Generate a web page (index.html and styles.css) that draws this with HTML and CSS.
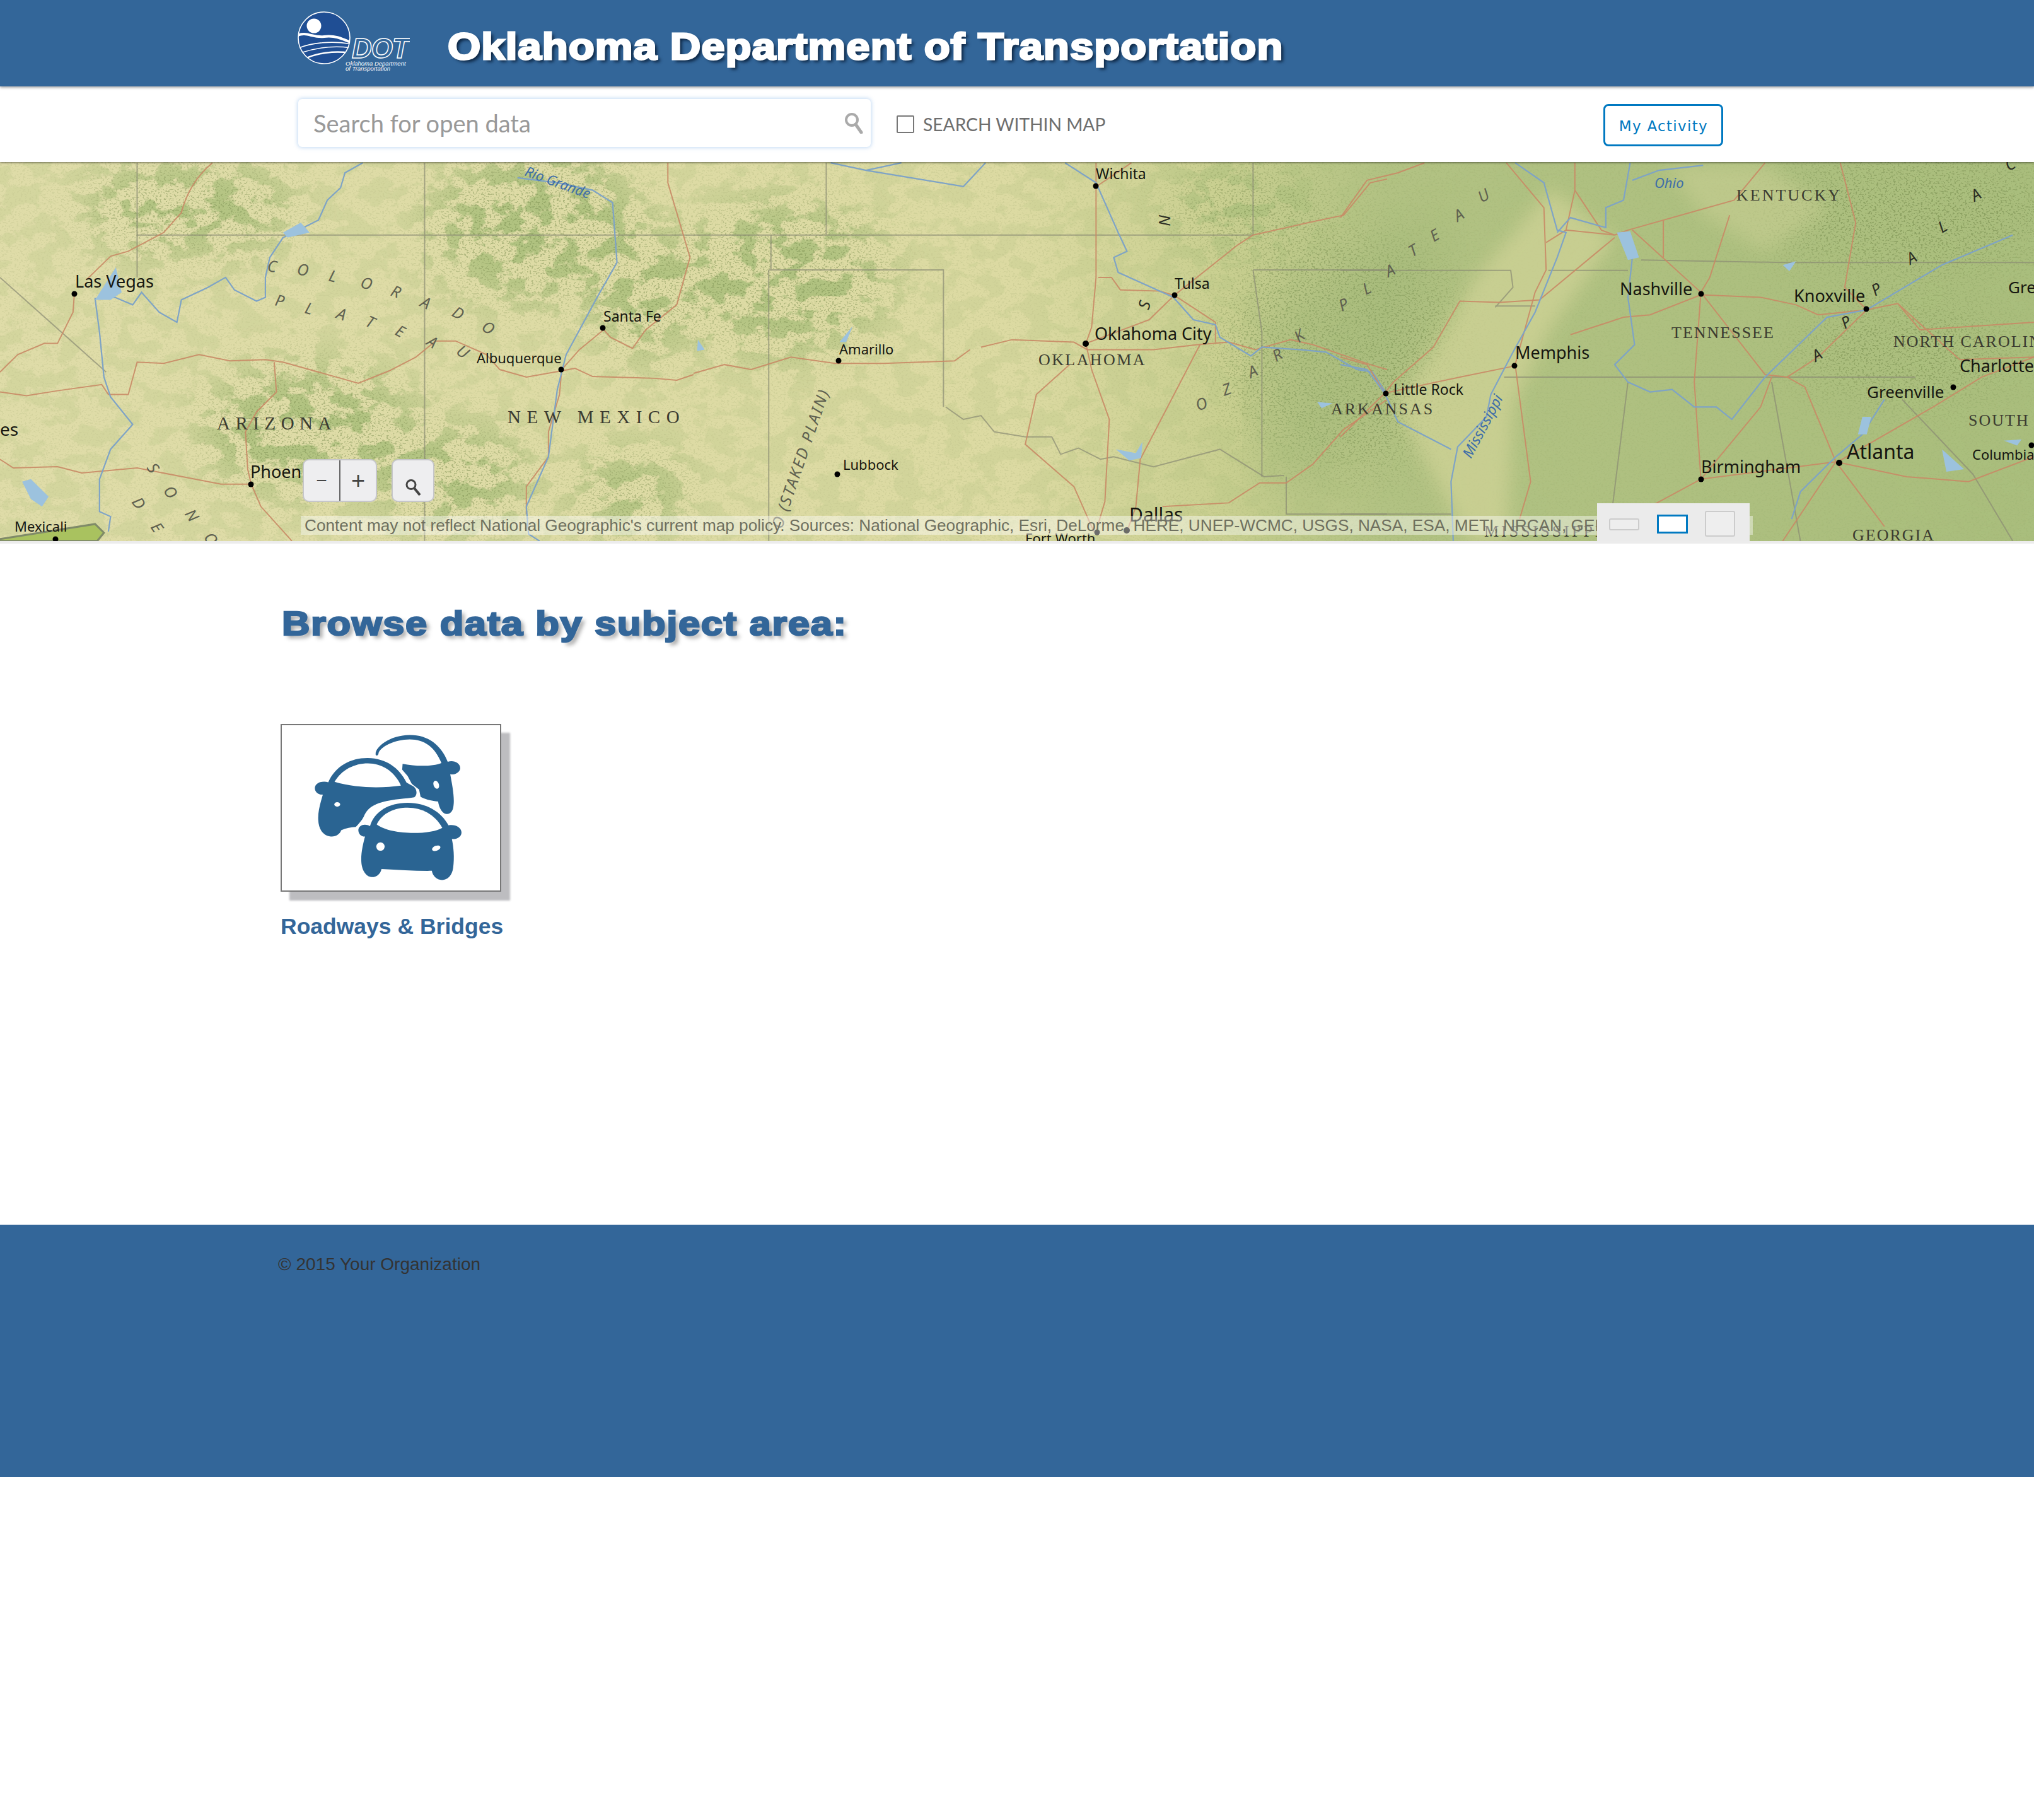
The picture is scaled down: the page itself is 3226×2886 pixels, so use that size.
FILE: index.html
```html
<!DOCTYPE html>
<html lang="en">
<head>
  <meta charset="UTF-8" />
  <title>Oklahoma Department of Transportation</title>
  <link rel="stylesheet" href="styles.css">
</head>
<body>
  <header class="site-header">
    <svg class="logo" viewBox="0 0 180 100" aria-hidden="true">
      <defs><clipPath id="logoClip"><circle cx="44" cy="42" r="41"/></clipPath></defs>
      <circle cx="44" cy="42" r="41" fill="#1f4e94" stroke="#fff" stroke-width="1.6"/>
      <circle cx="28" cy="23" r="11.5" fill="#fff"/>
      <g clip-path="url(#logoClip)" fill="none" stroke="#fff">
        <path d="M2 38 C16 32 26 42 44 40 C60 38 70 42 88 50" stroke-width="4"/>
        <path d="M4 58 C24 50 56 46 88 52" stroke-width="1.6"/>
        <path d="M6 66 C30 58 60 54 88 58" stroke-width="1.6"/>
        <path d="M12 76 C32 66 60 62 86 66" stroke-width="2.4"/>
      </g>
      <text class="logo-dot" x="88" y="74">DOT</text>
      <text class="logo-small" x="78" y="86">Oklahoma Department</text>
      <text class="logo-small" x="78" y="94">of Transportation</text>
    </svg>
    <h1 class="site-title">Oklahoma Department of Transportation</h1>
  </header>

  <div class="search-bar">
    <div class="search-box">
      <span class="search-placeholder">Search for open data</span>
      <svg class="search-icon" viewBox="0 0 30 34" aria-hidden="true">
        <circle cx="12" cy="12" r="9" fill="none" stroke="#aaa" stroke-width="4"/>
        <path d="M18 19 L27 32" stroke="#aaa" stroke-width="5" stroke-linecap="round"/>
      </svg>
    </div>
    <label class="within-map"><span class="checkbox"></span>SEARCH WITHIN MAP</label>
    <a class="activity-btn">My Activity</a>
  </div>

  <section class="map">
    <svg class="map-art" viewBox="0 257 3226 601" preserveAspectRatio="none" aria-hidden="true">
      <defs>
        <linearGradient id="land" x1="0" x2="1" y1="0" y2="0">
          <stop offset="0" stop-color="#dfdca8"/>
          <stop offset=".5" stop-color="#dcdaa2"/>
          <stop offset=".6" stop-color="#c9cf90"/>
          <stop offset=".68" stop-color="#b2c283"/>
          <stop offset="1" stop-color="#a9bd7c"/>
        </linearGradient>
        <filter id="patches" x="0" y="0" width="100%" height="100%" color-interpolation-filters="sRGB">
          <feTurbulence type="fractalNoise" baseFrequency=".024 .034" numOctaves="6" seed="7"/>
          <feColorMatrix values="0 0 0 0 .69  0 0 0 0 .76  0 0 0 0 .50  0 0 0 12 -5.9"/>
        </filter>
        <filter id="speckle" x="0" y="0" width="100%" height="100%" color-interpolation-filters="sRGB">
          <feTurbulence type="fractalNoise" baseFrequency=".3 .4" numOctaves="2" seed="3"/>
          <feColorMatrix values="0 0 0 0 .46  0 0 0 0 .54  0 0 0 0 .30  0 0 0 10 -5.6"/>
        </filter>
        <filter id="soft"><feGaussianBlur stdDeviation="14"/></filter>
        <filter id="softer"><feGaussianBlur stdDeviation="38"/></filter>
        <!-- where the vegetation texture shows through -->
        <mask id="veg" maskUnits="userSpaceOnUse" x="0" y="257" width="3226" height="601">
          <rect y="257" width="3226" height="601" fill="#3a3a3a"/>
          <g filter="url(#softer)">
            <g fill="#fff">
              <ellipse cx="300" cy="330" rx="170" ry="70"/>
              <ellipse cx="850" cy="360" rx="170" ry="120"/>
              <ellipse cx="1020" cy="470" rx="70" ry="100"/>
              <ellipse cx="490" cy="680" rx="170" ry="100"/>
              <ellipse cx="720" cy="760" rx="120" ry="80"/>
              <ellipse cx="1240" cy="440" rx="170" ry="120"/>
              <ellipse cx="1000" cy="780" rx="90" ry="60"/>
              <ellipse cx="1980" cy="330" rx="130" ry="60"/>
            </g>
            <rect x="2300" y="200" width="1000" height="720" fill="#000" opacity=".4"/>
          </g>
        </mask>
        <mask id="vegEast" maskUnits="userSpaceOnUse" x="0" y="257" width="3226" height="601">
          <g filter="url(#softer)" fill="#fff">
            <ellipse cx="2130" cy="560" rx="190" ry="180"/>
            <ellipse cx="3030" cy="340" rx="230" ry="90"/>
            <ellipse cx="3020" cy="560" rx="170" ry="70"/>
          </g>
        </mask>
      </defs>

      <rect y="257" width="3226" height="601" fill="url(#land)"/>
      <g mask="url(#veg)">
        <rect y="257" width="3226" height="601" filter="url(#patches)"/>
        <rect y="257" width="3226" height="601" filter="url(#speckle)" opacity=".45"/>
      </g>
      <g mask="url(#vegEast)">
        <rect y="257" width="3226" height="601" filter="url(#speckle)" opacity=".5"/>
      </g>
      <!-- pale Mississippi valley and darker Ozark green -->
      <path d="M2460 300 L2340 440 L2270 560 L2210 640 L2330 858 L2390 858 L2400 640 L2460 520 L2560 380 Z" fill="#d2d498" opacity=".7" filter="url(#soft)"/>
      <path d="M2640 260 L2800 260 L2900 330 L2800 400 L2700 340 Z" fill="#cdd196" opacity=".5" filter="url(#soft)"/>
      <path d="M2000 480 L2140 420 L2300 330 L2250 500 L2170 640 L2090 800 L2000 760 Z" fill="#9ab272" opacity=".4" filter="url(#softer)"/>

      <!-- west -->
      <g transform="translate(0 250.3) scale(.7015 .395)" fill="none">
        <path class="border" d="M310 20 V480 M310 310 H1568 M960 20 V1538 M0 480 L240 860"/>
        <path class="road" d="M480 20 C440 80 420 150 410 220 L370 300 L290 375 L250 395 L195 490 M168 550 L165 620 L130 745 L100 745 L40 790 L0 860"/>
        <path class="road" d="M0 940 L60 955 L130 935 L230 910 L245 950 L290 950 L310 820 L370 825 L450 790 L520 815 L600 810 L640 820 L760 880 L810 905 L880 855 L940 800 L985 735 L1030 735 L1100 790 L1130 850 L1190 880 L1270 855 L1300 845 L1340 878 L1480 885 L1530 893 L1568 870"/>
        <path class="road" d="M620 820 L625 940 L580 1020 L555 1100 L560 1250 L568 1310 L500 1310 L310 1245 L185 1265 L130 1240 L30 1245 L0 1210 M568 1310 L590 1400 L660 1538"/>
        <path class="road" d="M1270 850 L1310 770 L1365 690 L1380 720 L1430 765 L1460 690 L1530 590 L1560 400 L1510 100 L1510 20 M1270 850 L1265 950 L1240 1100 L1240 1200 L1190 1320 L1190 1430"/>
        <path class="river" d="M820 20 L780 60 L770 120 L740 170 L720 250 L675 290 L640 320 L610 400 L600 480 L600 560 L580 575 L530 530 L510 480 L470 520 L410 570 L400 660 L360 620 L320 540 L300 590 L260 560 L215 565 L225 700 L235 880 L250 960 L300 1070 L250 1170 L225 1290 L225 1420 L250 1440 L245 1500"/>
        <path class="river" d="M1170 80 L1260 100 L1340 130 L1385 180 L1395 420 L1350 560 L1280 790 L1260 930 L1240 1200 L1190 1400 L1195 1510 L1220 1538"/>
        <path class="lake" d="M640 300 L680 260 L700 300 L650 320 Z M50 1300 L70 1290 L110 1360 L95 1400 L70 1370 Z M262 440 L275 540 L250 570 L215 570 Z"/>
        <path d="M0 1530 L215 1470 L235 1505 L220 1538 L0 1538 Z" fill="#a9c25f" stroke="#7f8a68" stroke-width="3" vector-effect="non-scaling-stroke"/>
      </g>

      <!-- central -->
      <g transform="translate(1100 250.3) scale(.7015 .395)" fill="none">
        <path class="border" d="M300 20 V310 M0 310 H1265 M175 310 V450 M170 450 H565 V1000 M170 450 V1538 M1265 20 V310 M1265 450 H1568 M1265 450 L1285 700 V1280 M1340 1280 V1430 H1568"/>
        <path class="border" d="M570 1000 L610 1050 L650 1035 L680 1100 L750 1120 L810 1120 L830 1190 L870 1165 L920 1210 L950 1200 L1040 1240 L1190 1170 L1290 1280 L1335 1275"/>
        <path class="road" d="M0 865 L70 830 L130 850 L220 800 L320 825 L430 825 L590 815 L625 770 M650 760 L720 730 L860 740 L890 770 L1040 770 L1140 750 L1210 740 L1270 770 L1350 730 L1400 750 L1530 830 L1568 850"/>
        <path class="road" d="M910 20 V480 L900 680 L887 745 L900 850 L940 1050 L930 1380 L910 1500 M915 110 L990 20"/>
        <path class="road" d="M915 480 H945 L965 530 L1055 535 L1087 552 L1230 350 L1265 310 L1390 260 L1470 230 L1530 100 L1568 85 M887 745 L1030 650 L1087 552 L1180 660 L1180 740"/>
        <path class="road" d="M850 830 L775 950 L750 1150 L860 1320 L905 1500 M1145 750 L1010 1210 L1000 1400 L980 1500 M1568 970 L1470 1090 L1400 1230 L1340 1305 L1280 1305 L1210 1385 L1060 1400"/>
        <path class="river" d="M310 20 L390 50 L470 20 M390 50 L610 115 L660 20 M840 20 L910 100 L960 300 L980 375 L950 400 L960 460 L1085 560 L1130 650 L1180 670 L1190 720 L1260 795 L1285 760 L1370 770 L1430 780 L1500 850 L1535 860 L1568 950"/>
        <path class="lake" d="M330 740 L360 675 L345 740 Z M955 1170 L1000 1185 L1015 1140 L1012 1205 L985 1215 Z M10 730 L25 770 L8 775 Z M1410 980 L1445 985 L1420 1005 Z"/>
      </g>

      <!-- east -->
      <g transform="translate(2126 250.3) scale(.7015 .395)" fill="none">
        <path class="border" d="M0 452 H385 L390 520 L350 600 M350 595 H440 M470 452 H650 M680 410 L1000 420 H1568 M370 880 H1300 M650 900 L615 1400 M975 900 L1040 1538 M0 1430 H250 M1270 970 L1430 1270 L1520 1538"/>
        <path class="road" d="M0 240 L60 90 L130 60 L190 20 M375 20 L460 200 L465 450 L440 540 L395 830 L430 1300 L405 1450 M530 20 V130 L510 290 L465 340 M530 130 L590 290 L620 310 L510 290"/>
        <path class="road" d="M620 310 L650 290 L810 210 L890 170 L960 20 M660 290 L815 540 L960 870 L1010 880 L1050 920 L1120 1220 L1230 1480 M880 230 L835 480 L815 540 L800 900 L815 1290 M730 250 V400"/>
        <path class="road" d="M620 320 L450 570 L360 580 L270 575 L210 760 L120 900 L100 945 M100 945 L270 880 L395 835 M0 1120 L100 945 M0 800 L60 830 L100 945"/>
        <path class="road" d="M520 710 L640 640 L700 630 L815 550 L950 560 L1030 590 L1080 630 L1190 610 L1260 585 L1400 810 L1568 800 M1260 585 L1310 690 L1568 660 M1190 610 L1080 800 L1010 880"/>
        <path class="road" d="M975 880 L950 1000 L815 1290 L700 1400 M815 1290 L1120 1220 L1280 1280 L1420 1300 L1568 1200 M1120 1220 L1000 1538 M1120 1225 L1340 1000 L1450 880 L1568 800 M1130 20 L1165 260 L1140 520 L1190 610"/>
        <path class="river" d="M395 20 L460 100 L490 290 L510 300 L490 400 L440 620 L390 780 L340 950 L330 1040 L265 1160 L250 1300 L255 1538 M655 20 L640 170 L600 200 L600 280 L520 240 L490 300"/>
        <path class="river" d="M630 300 L660 400 L650 560 L665 750 L620 830 L650 900 L700 940 L750 930 L800 1000 L850 1000 L885 1050 L960 880 L1100 640 L1190 610 L1360 430 L1520 310 M0 830 L60 850 L100 945 L130 1060 L250 1170 M660 90 L720 50 L820 30 M1230 970 L1180 1110 L1120 1200 L1040 1340 L1020 1450"/>
        <path class="lake" d="M625 300 L655 295 L675 400 L650 410 Z M1000 430 L1030 415 L1015 455 Z M1180 1040 L1200 1040 L1190 1110 L1170 1110 Z M1360 1170 L1410 1250 L1370 1260 Z M1500 1135 L1540 1130 L1530 1155 Z"/>
      </g>

      <!-- city dots -->
      <g fill="#000">
        <circle cx="118" cy="466" r="4.5"/><circle cx="398" cy="768" r="4.5"/><circle cx="890" cy="586" r="4.5"/>
        <circle cx="956" cy="520" r="4.5"/><circle cx="88" cy="855" r="4.5"/><circle cx="1738" cy="295" r="4.5"/>
        <circle cx="1863" cy="468" r="4.5"/><circle cx="1722" cy="545" r="5"/><circle cx="1330" cy="572" r="4.5"/>
        <circle cx="1328" cy="752" r="4.5"/><circle cx="1787" cy="841" r="5"/><circle cx="1740" cy="844" r="4.5"/>
        <circle cx="2198" cy="624" r="4.5"/><circle cx="2402" cy="580" r="4.5"/><circle cx="2698" cy="466" r="4.5"/>
        <circle cx="2960" cy="490" r="4.5"/><circle cx="3098" cy="614" r="4.5"/><circle cx="2698" cy="760" r="4.5"/>
        <circle cx="2917" cy="734" r="5"/><circle cx="3222" cy="706" r="4.5"/>
      </g>

      <!-- cities -->
      <g class="city">
        <text x="119" y="456" font-size="27">Las Vegas</text>
        <text x="756" y="576" font-size="22">Albuquerque</text>
        <text x="957" y="510" font-size="23">Santa Fe</text>
        <text x="397" y="758" font-size="27">Phoenix</text>
        <text x="23" y="843" font-size="22">Mexicali</text>
        <text x="0" y="691" font-size="28">es</text>
        <text x="1738" y="284" font-size="23">Wichita</text>
        <text x="1863" y="458" font-size="23">Tulsa</text>
        <text x="1736" y="539" font-size="27">Oklahoma City</text>
        <text x="1331" y="562" font-size="22">Amarillo</text>
        <text x="1337" y="745" font-size="22">Lubbock</text>
        <text x="1791" y="827" font-size="30">Dallas</text>
        <text x="1626" y="862" font-size="22">Fort Worth</text>
        <text x="2210" y="626" font-size="23">Little Rock</text>
        <text x="2403" y="569" font-size="27">Memphis</text>
        <text x="2569" y="468" font-size="27">Nashville</text>
        <text x="2845" y="479" font-size="27">Knoxville</text>
        <text x="3108" y="590" font-size="27">Charlotte</text>
        <text x="2961" y="631" font-size="26">Greenville</text>
        <text x="3185" y="465" font-size="26">Gre</text>
        <text x="2698" y="750" font-size="27">Birmingham</text>
        <text x="2929" y="728" font-size="32">Atlanta</text>
        <text x="3128" y="729" font-size="22">Columbia</text>
      </g>

      <!-- states -->
      <g class="state">
        <text x="344" y="681" font-size="29" letter-spacing="8.5">ARIZONA</text>
        <text x="805" y="671" font-size="29" letter-spacing="9.5">NEW MEXICO</text>
        <text x="1647" y="579" font-size="26" letter-spacing="2.4">OKLAHOMA</text>
        <text x="2111" y="657" font-size="26" letter-spacing="3">ARKANSAS</text>
        <text x="2754" y="318" font-size="26" letter-spacing="3">KENTUCKY</text>
        <text x="2651" y="536" font-size="26" letter-spacing="2">TENNESSEE</text>
        <text x="3003" y="550" font-size="26" letter-spacing="2">NORTH CAROLINA</text>
        <text x="3122" y="675" font-size="26" letter-spacing="2">SOUTH</text>
        <text x="2938" y="857" font-size="26" letter-spacing="2">GEORGIA</text>
        <text x="2354" y="851" font-size="26" letter-spacing="4">MISSISSIPPI</text>
      </g>

      <!-- physical regions, spaced along their arcs -->
      <g class="region">
        <text x="423" y="430" transform="rotate(8 423 430)">C</text>
        <text x="470" y="435" transform="rotate(10 470 435)">O</text>
        <text x="520" y="445" transform="rotate(14 520 445)">L</text>
        <text x="570" y="455" transform="rotate(18 570 455)">O</text>
        <text x="618" y="468" transform="rotate(22 618 468)">R</text>
        <text x="665" y="485" transform="rotate(26 665 485)">A</text>
        <text x="715" y="500" transform="rotate(30 715 500)">D</text>
        <text x="762" y="522" transform="rotate(34 762 522)">O</text>
        <text x="435" y="484" transform="rotate(12 435 484)">P</text>
        <text x="482" y="496" transform="rotate(16 482 496)">L</text>
        <text x="532" y="504" transform="rotate(20 532 504)">A</text>
        <text x="578" y="516" transform="rotate(24 578 516)">T</text>
        <text x="625" y="530" transform="rotate(28 625 530)">E</text>
        <text x="675" y="546" transform="rotate(32 675 546)">A</text>
        <text x="722" y="560" transform="rotate(36 722 560)">U</text>
        <text x="232" y="742" transform="rotate(55 232 742)">S</text>
        <text x="258" y="778" transform="rotate(55 258 778)">O</text>
        <text x="292" y="815" transform="rotate(55 292 815)">N</text>
        <text x="322" y="852" transform="rotate(55 322 852)">O</text>
        <text x="208" y="796" transform="rotate(55 208 796)">D</text>
        <text x="238" y="836" transform="rotate(55 238 836)">E</text>
        <text x="1838" y="340" transform="rotate(90 1838 340)" class="dark">N</text>
        <text x="1822" y="492" transform="rotate(-75 1822 492)" class="dark">S</text>
        <text x="1900" y="652" transform="rotate(-20 1900 652)">O</text>
        <text x="1942" y="628" transform="rotate(-20 1942 628)">Z</text>
        <text x="1984" y="600" transform="rotate(-25 1984 600)">A</text>
        <text x="2024" y="574" transform="rotate(-30 2024 574)">R</text>
        <text x="2060" y="544" transform="rotate(-35 2060 544)">K</text>
        <text x="2128" y="494" transform="rotate(-25 2128 494)">P</text>
        <text x="2166" y="468" transform="rotate(-25 2166 468)">L</text>
        <text x="2202" y="440" transform="rotate(-25 2202 440)">A</text>
        <text x="2240" y="408" transform="rotate(-30 2240 408)">T</text>
        <text x="2274" y="384" transform="rotate(-30 2274 384)">E</text>
        <text x="2312" y="352" transform="rotate(-30 2312 352)">A</text>
        <text x="2350" y="322" transform="rotate(-30 2350 322)">U</text>
        <text x="2880" y="574" transform="rotate(-30 2880 574)" class="dark">A</text>
        <text x="2926" y="522" transform="rotate(-30 2926 522)" class="dark">P</text>
        <text x="2974" y="470" transform="rotate(-30 2974 470)" class="dark">P</text>
        <text x="3030" y="420" transform="rotate(-30 3030 420)" class="dark">A</text>
        <text x="3080" y="370" transform="rotate(-30 3080 370)" class="dark">L</text>
        <text x="3132" y="320" transform="rotate(-30 3132 320)" class="dark">A</text>
        <text x="3186" y="272" transform="rotate(-30 3186 272)" class="dark">C</text>
        <text x="1240" y="840" transform="rotate(-71 1240 840)" letter-spacing="2.5">O (STAKED PLAIN)</text>
      </g>

      <g class="water">
        <text x="831" y="278" font-size="22" transform="rotate(20 831 278)">Rio Grande</text>
        <text x="2624" y="298" font-size="22">Ohio</text>
        <text x="2333" y="728" font-size="23" transform="rotate(-62 2333 728)">Mississippi</text>
      </g>
    </svg>

    <div class="zoom-group">
      <button class="zoom-btn">−</button><button class="zoom-btn">+</button>
    </div>
    <button class="locate-btn">
      <svg viewBox="0 0 25 27" aria-hidden="true">
        <circle cx="9" cy="9.5" r="7" fill="none" stroke="#444" stroke-width="3"/>
        <path d="M14 15 L23 26" stroke="#444" stroke-width="4"/>
      </svg>
    </button>

    <div class="attribution">Content may not reflect National Geographic's current map policy. Sources: National Geographic, Esri, DeLorme, HERE, UNEP-WCMC, USGS, NASA, ESA, METI, NRCAN, GEBCO, NOAA, iPC</div>

    <div class="size-panel">
      <span class="size small"></span>
      <span class="size medium"></span>
      <span class="size large"></span>
    </div>
  </section>

  <main class="content">
    <h2 class="browse-title">Browse data by subject area:</h2>
    <a class="subject">
      <span class="subject-thumb">
        <svg viewBox="78 87 1044 791" aria-hidden="true">
          <g fill="#2a6492">
            <!-- back car -->
            <path d="M527 228 C522 195 590 135 690 134 C775 133 840 180 872 262 C900 252 932 268 932 292 C932 312 905 326 884 322 C893 370 905 430 900 470 C898 498 885 514 866 512 C845 510 830 480 826 452 C790 450 760 440 742 430 L735 395 L700 368 L680 330 L654 300 L656 272 C720 285 800 285 842 268 C810 190 760 155 690 155 C620 155 545 190 540 225 C538 232 528 235 527 228 Z"/>
            <!-- left car -->
            <path d="M300 360 C335 280 410 243 490 244 C575 245 640 290 675 362 L708 380 C725 392 728 420 712 432 C670 440 590 440 530 465 C495 480 480 500 470 525 C460 545 445 560 432 574 C410 575 385 580 362 590 C355 610 335 622 312 620 C275 616 254 585 252 540 C250 500 262 460 274 420 C250 420 234 405 236 385 C240 360 275 352 300 360 Z"/>
            <!-- front car -->
            <path d="M500 570 C520 500 590 458 680 458 C770 458 840 500 876 566 C905 560 938 575 938 600 C938 622 915 634 892 632 C900 670 905 720 898 770 C893 805 872 828 845 828 C818 828 800 808 796 784 C720 785 640 780 555 775 C550 800 530 815 508 814 C480 812 458 780 458 730 C458 690 468 650 476 620 C455 620 444 605 444 588 C446 565 475 555 500 570 Z"/>
          </g>
          <g fill="#fff">
            <path d="M330 358 C365 300 425 270 490 270 C555 270 615 305 648 376 C560 388 440 390 330 358 Z"/>
            <path d="M532 562 C560 505 620 482 680 482 C750 482 810 515 846 578 C790 612 600 615 532 562 Z"/>
            <ellipse cx="817" cy="372" rx="13" ry="20" transform="rotate(-20 817 372)"/>
            <ellipse cx="343" cy="466" rx="14" ry="11"/>
            <circle cx="550" cy="668" r="20"/>
            <ellipse cx="817" cy="676" rx="21" ry="12" transform="rotate(-20 817 676)"/>
          </g>
        </svg>
      </span>
      <span class="subject-name">Roadways &amp; Bridges</span>
    </a>
  </main>

  <footer class="site-footer">© 2015 Your Organization</footer>
</body>
</html>
```

FILE: styles.css
```css
* { box-sizing: border-box; }

body {
  margin: 0;
  background: #fff;
  font-family: "Liberation Sans", Arial, sans-serif;
  height: 2886px;
  overflow: hidden;
}

.site-header {
  height: 137px;
  background: #336699;
  display: flex;
  align-items: flex-start;
  padding-left: 470px;
  position: relative;
  z-index: 2;
  box-shadow: 0 2px 4px rgba(0,0,0,0.35);
}
.logo {
  width: 180px;
  height: 100px;
  margin-top: 18px;
  flex: none;
}
.logo-dot {
  font: italic bold 44px "Liberation Sans", sans-serif;
  fill: none;
  stroke: #fff;
  stroke-width: 1.5;
  letter-spacing: -1px;
}
.logo-small {
  font: italic 9.5px "Liberation Sans", sans-serif;
  fill: #fff;
}
.site-title {
  margin: 38px 0 0 60px;
  font-size: 60px;
  line-height: 72px;
  font-weight: bold;
  color: #fff;
  white-space: nowrap;
  -webkit-text-stroke: 3px #fff;
  letter-spacing: 0.9px;
  text-shadow: 4px 4px 5px #0c2440;
  transform: scaleX(1.12);
  transform-origin: left;
}

.search-bar {
  height: 120px;
  display: flex;
  align-items: center;
  padding-left: 473px;
  background: #fff;
  position: relative;
  z-index: 1;
  box-shadow: 0 1px 3px rgba(0,0,0,0.5);
}
.search-box {
  width: 908px;
  height: 76px;
  margin-top: -4px;
  padding: 0 12px 0 24px;
  display: flex;
  align-items: center;
  justify-content: space-between;
  border-radius: 6px;
  box-shadow: 0 0 6px 1px rgba(150,190,235,0.6);
}
.search-placeholder {
  font: 38px Lato, sans-serif;
  color: #999;
}
.search-icon {
  width: 30px;
  height: 34px;
}
.within-map {
  display: flex;
  align-items: center;
  margin-left: 41px;
  font: 28.2px Lato, sans-serif;
  color: #6e6e6e;
  white-space: nowrap;
}
.checkbox {
  width: 28px;
  height: 28px;
  margin-right: 14px;
  border: 2px solid #777;
  border-radius: 2px;
}
.activity-btn {
  margin-left: 790px;
  width: 190px;
  height: 67px;
  margin-top: 2px;
  padding-top: 3px;
  display: flex;
  align-items: center;
  justify-content: center;
  border: 3px solid #0079c1;
  border-radius: 8px;
  font: 23px "DejaVu Sans", sans-serif;
  letter-spacing: 1.3px;
  color: #0079c1;
}

.map {
  height: 605px;
  border-bottom: 4px solid #ececec;
  position: relative;
  overflow: hidden;
}
.map-art {
  display: block;
  width: 100%;
  height: 601px;
}
.border { stroke: #8b8c74; stroke-width: 2; opacity: .7; vector-effect: non-scaling-stroke; fill: none; }
.road { stroke: #c98a66; stroke-width: 2; opacity: .9; vector-effect: non-scaling-stroke; fill: none; }
.river { stroke: #7ea3c6; stroke-width: 2.2; vector-effect: non-scaling-stroke; fill: none; }
.lake { fill: #9cc2de; stroke: none; }

.city text {
  font-family: "Noto Sans", sans-serif;
  fill: #161610;
}
.state text {
  font-family: "Liberation Serif", serif;
  fill: #3b3b30;
}
.region text {
  font: italic 25px "Noto Sans", sans-serif;
  fill: #5f6150;
}
.region .dark {
  fill: #2c2e24;
}
.water text {
  font-family: "Noto Sans", sans-serif;
  font-style: italic;
  fill: #3f6ea8;
}

.zoom-group {
  position: absolute;
  left: 480px;
  top: 471px;
  display: flex;
  width: 118px;
  height: 68px;
  background: #eeeef0;
  border: 2px solid #c6c6ca;
  border-radius: 10px;
}
.zoom-btn {
  flex: 1;
  padding: 0;
  border: 0;
  background: none;
  font: 38px "Liberation Sans", sans-serif;
  color: #444;
}
.zoom-btn:first-child {
  border-right: 2px solid #666;
  font-size: 30px;
}
.locate-btn {
  position: absolute;
  left: 621px;
  top: 471px;
  width: 68px;
  height: 68px;
  padding: 24px 0 0;
  background: #eeeef0;
  border: 2px solid #c6c6ca;
  border-radius: 10px;
}
.locate-btn svg {
  width: 25px;
  height: 27px;
}
.attribution {
  position: absolute;
  left: 477px;
  top: 561px;
  width: 2303px;
  height: 30px;
  padding-left: 6px;
  overflow: hidden;
  white-space: nowrap;
  background: rgba(255,255,255,0.42);
  font-size: 26.2px;
  line-height: 30px;
  color: #6f705f;
}
.size-panel {
  position: absolute;
  left: 2533px;
  top: 541px;
  width: 242px;
  height: 60px;
  background: #ebebeb;
}
.size {
  position: absolute;
}
.size.small {
  left: 19px;
  top: 24px;
  width: 48px;
  height: 19px;
  background: #eee;
  border: 2px solid #ccc;
  border-radius: 3px;
}
.size.medium {
  left: 95px;
  top: 18px;
  width: 49px;
  height: 30px;
  background: #fff;
  border: 3px solid #0079c1;
}
.size.large {
  left: 171px;
  top: 12px;
  width: 48px;
  height: 41px;
  background: #eee;
  border: 2px solid #ccc;
  border-radius: 3px;
}

.content {
  height: 1080px;
  padding: 94px 0 0 445px;
}
.browse-title {
  width: max-content;
  margin: 0 0 0 2px;
  font-size: 54px;
  line-height: 64px;
  font-weight: bold;
  color: #336699;
  white-space: nowrap;
  -webkit-text-stroke: 2.5px #336699;
  letter-spacing: 1.4px;
  text-shadow: 5px 5px 6px #aaa;
  transform: scaleX(1.14);
  transform-origin: left;
}
.subject {
  display: block;
  margin-top: 128px;
  width: 380px;
}
.subject-thumb {
  display: block;
  width: 350px;
  height: 266px;
  border: 2px solid #777;
  background: #fff;
  box-shadow: 14px 14px 3px #bdbdc0;
}
.subject-thumb svg {
  display: block;
  width: 100%;
  height: 100%;
}
.subject-name {
  display: block;
  margin-top: 33px;
  font-size: 35.5px;
  line-height: 44px;
  font-weight: bold;
  color: #336699;
  white-space: nowrap;
}

.site-footer {
  height: 400px;
  padding: 46px 0 0 441px;
  background: #336699;
  font-size: 28px;
  line-height: 34px;
  color: #333;
}
```
